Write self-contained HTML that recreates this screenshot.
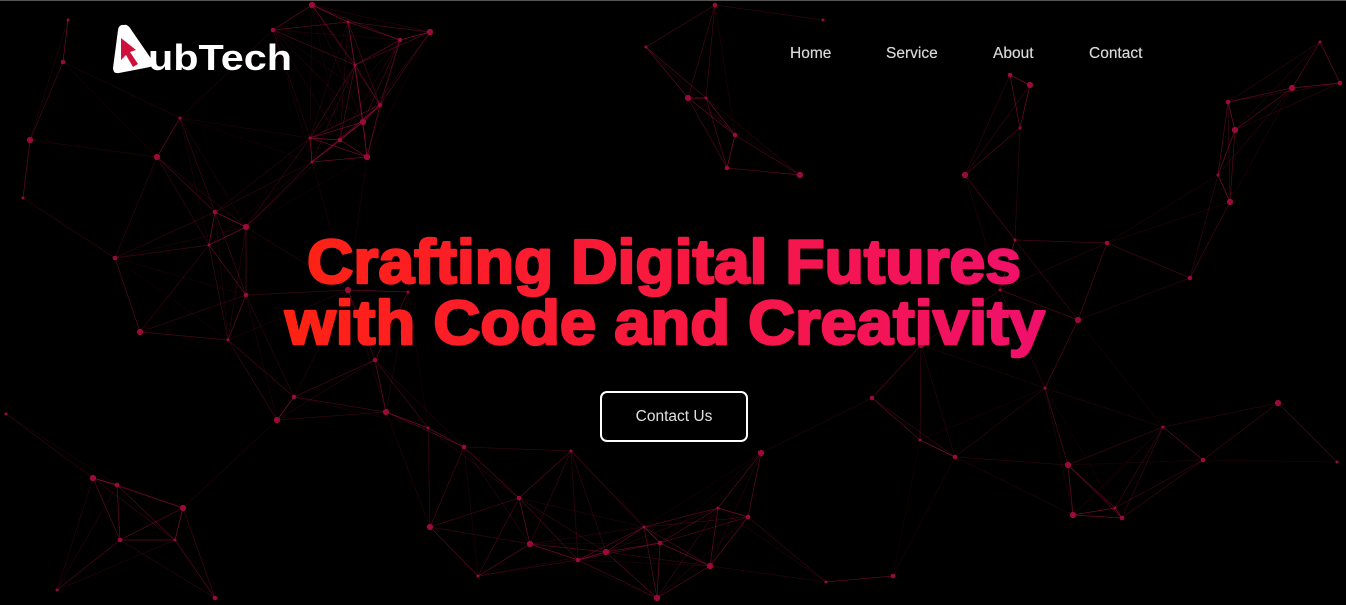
<!DOCTYPE html>
<html><head><meta charset="utf-8"><style>
html,body{margin:0;padding:0;background:#000;width:1346px;height:605px;overflow:hidden;font-family:"Liberation Sans",sans-serif}
#net{position:absolute;left:0;top:0}
.nav{position:absolute;top:45px;color:#d8d8d8;font-size:15.5px;text-shadow:0 0 0.4px #d8d8d8}
.btn{position:absolute;left:600px;top:391px;width:144px;height:47px;border:2px solid #fff;border-radius:7px;color:#e0e0e0;font-size:15.5px;text-align:center;line-height:47px}
.top{position:absolute;left:0;top:0;width:1346px;height:1px;background:#555}
</style></head><body>
<svg id="net" width="1346" height="605"></svg>
<svg style="position:absolute;left:0;top:0" width="1346" height="605">
<defs><linearGradient id="g" x1="280" x2="1050" y1="0" y2="0" gradientUnits="userSpaceOnUse"><stop offset="0" stop-color="#ff2212"/><stop offset="1" stop-color="#f0106c"/></linearGradient></defs>
<g stroke="url(#g)" stroke-width="2.5" stroke-linejoin="round">
<text x="307" y="283" textLength="714" lengthAdjust="spacingAndGlyphs" font-family="Liberation Sans" font-weight="bold" font-size="62" fill="url(#g)">Crafting Digital Futures</text>
<text x="285" y="344" textLength="760" lengthAdjust="spacingAndGlyphs" font-family="Liberation Sans" font-weight="bold" font-size="62" fill="url(#g)">with Code and Creativity</text>
</g>
<path d="M124 25 Q119 24 118 30 L113 68 Q113 74 119 73 L150 67 Q156 65 152 60 L130 28 Q127 24 124 25Z" fill="#fff"/>
<path d="M121 38 L136 50 L130 52 L138 64 L133 67 L126 55 L121 60Z" fill="#d0103c"/>
<text x="148" y="70" textLength="144" lengthAdjust="spacingAndGlyphs" font-family="Liberation Sans" font-weight="bold" font-size="36" fill="#fff">ubTech</text>
</svg>
<div class="top"></div>
<div class="nav" style="left:790px">Home</div>
<div class="nav" style="left:886px">Service</div>
<div class="nav" style="left:993px">About</div>
<div class="nav" style="left:1089px">Contact</div>
<div class="btn">Contact Us</div>
<script>
var P=[[68,20],[63,62],[30,140],[23,198],[115,258],[157,157],[180,118],[215,212],[246,227],[209,245],[246,295],[140,332],[228,340],[294,397],[277,420],[6,414],[117,485],[183,508],[175,540],[120,540],[93,478],[57,590],[215,598],[312,5],[348,22],[400,40],[430,32],[355,65],[380,105],[363,122],[312,162],[340,140],[367,157],[310,138],[273,30],[348,290],[408,292],[375,360],[386,412],[428,428],[464,447],[430,527],[478,576],[519,498],[530,544],[571,451],[578,560],[606,552],[644,527],[660,543],[710,566],[718,508],[748,517],[761,453],[826,582],[893,576],[657,598],[646,47],[715,5],[688,98],[706,98],[735,135],[800,175],[823,20],[727,168],[965,175],[1015,240],[1010,75],[1030,85],[1020,128],[1107,243],[1078,320],[1045,388],[1190,278],[1230,202],[1218,175],[1228,102],[1292,88],[1320,42],[1340,83],[1235,130],[920,440],[955,457],[1068,465],[1163,427],[1203,460],[1278,403],[1337,462],[1122,518],[1073,515],[1115,508],[872,398],[921,345],[1000,290]];
var s='';
for(var i=0;i<P.length;i++)for(var j=i+1;j<P.length;j++){var dx=P[i][0]-P[j][0],dy=P[i][1]-P[j][1],d=Math.sqrt(dx*dx+dy*dy);if(d<140)s+='<line x1="'+P[i][0]+'" y1="'+P[i][1]+'" x2="'+P[j][0]+'" y2="'+P[j][1]+'" stroke="#a0103a" stroke-opacity="'+(0.95-d/170).toFixed(2)+'" stroke-width="0.7"/>';}
for(var i=0;i<P.length;i++)s+='<circle cx="'+P[i][0]+'" cy="'+P[i][1]+'" r="'+(1.5+(i%3)*0.8)+'" fill="#9a0c36"/>';
document.getElementById('net').innerHTML=s;
</script>
</body></html>
